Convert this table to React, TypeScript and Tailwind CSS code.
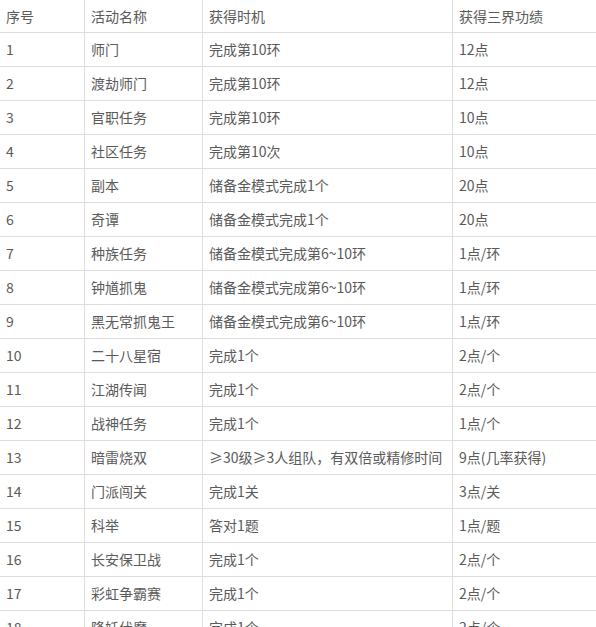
import React from "react";

const ROWS: [string, string, string, string][] = [
  ["1", "师门", "完成第10环", "12点"],
  ["2", "渡劫师门", "完成第10环", "12点"],
  ["3", "官职任务", "完成第10环", "10点"],
  ["4", "社区任务", "完成第10次", "10点"],
  ["5", "副本", "储备金模式完成1个", "20点"],
  ["6", "奇谭", "储备金模式完成1个", "20点"],
  ["7", "种族任务", "储备金模式完成第6~10环", "1点/环"],
  ["8", "钟馗抓鬼", "储备金模式完成第6~10环", "1点/环"],
  ["9", "黑无常抓鬼王", "储备金模式完成第6~10环", "1点/环"],
  ["10", "二十八星宿", "完成1个", "2点/个"],
  ["11", "江湖传闻", "完成1个", "2点/个"],
  ["12", "战神任务", "完成1个", "1点/个"],
  ["13", "暗雷烧双", "≥30级≥3人组队，有双倍或精修时间", "9点(几率获得)"],
  ["14", "门派闯关", "完成1关", "3点/关"],
  ["15", "科举", "答对1题", "1点/题"],
  ["16", "长安保卫战", "完成1个", "2点/个"],
  ["17", "彩虹争霸赛", "完成1个", "2点/个"],
  ["18", "降妖伏魔", "完成1个", "2点/个"],
];

const COLS = ["w-[85px]", "w-[118px]", "w-[250px]", "w-[143px]"];

function Row({ cells, header }: { cells: string[]; header?: boolean }) {
  return (
    <div className={`flex border-b border-[#dedede] ${header ? "h-[33px]" : "h-[34px]"}`}>
      {cells.map((c, i) => (
        <div
          key={i}
          className={`${COLS[i]} shrink-0 flex items-center pl-[6px] whitespace-nowrap ${
            i < 3 ? "border-r border-[#dedede]" : ""
          }`}
        >
          {c}
        </div>
      ))}
    </div>
  );
}

export default function App() {
  return (
    <div
      className="w-[596px] h-[627px] overflow-hidden bg-white text-[14px] text-[#5a5a5a]"
      style={{ fontFamily: '"Noto Sans CJK SC", "Noto Sans", sans-serif' }}
    >
      <Row header cells={["序号", "活动名称", "获得时机", "获得三界功绩"]} />
      {ROWS.map((r) => (
        <Row key={r[0]} cells={r} />
      ))}
    </div>
  );
}
